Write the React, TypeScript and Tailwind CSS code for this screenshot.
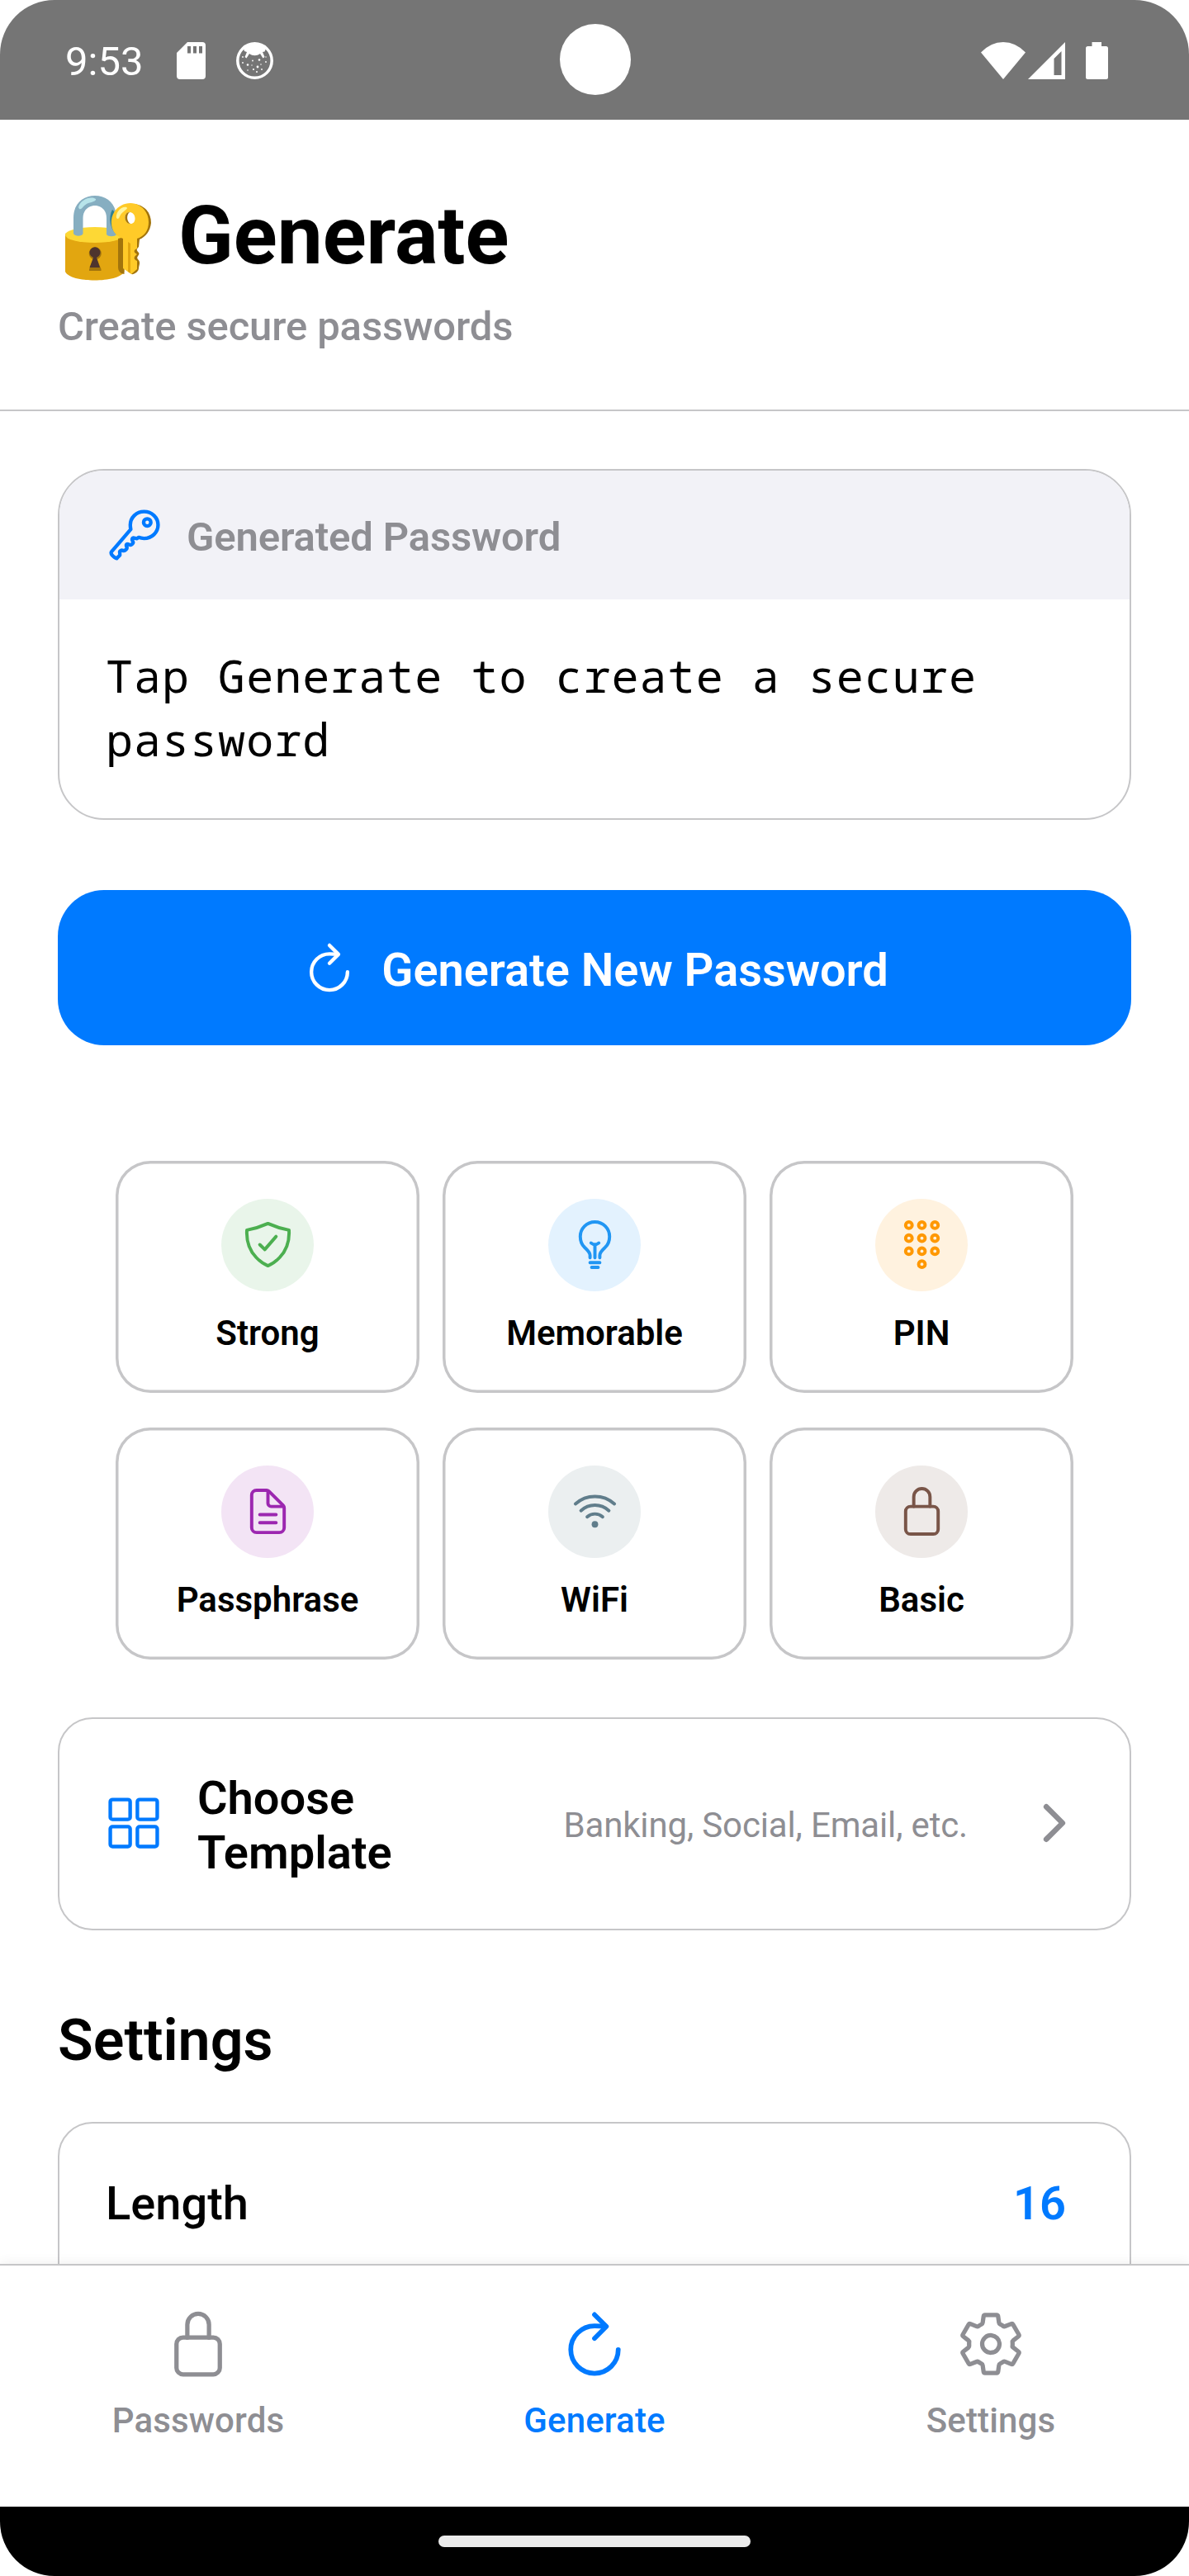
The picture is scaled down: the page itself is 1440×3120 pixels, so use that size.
import type { ComponentType } from "react";
import {
  IoBulbOutline,
  IoChevronForward,
  IoDocumentTextOutline,
  IoGridOutline,
  IoKeyOutline,
  IoKeypadOutline,
  IoLockClosedOutline,
  IoRefreshOutline,
  IoSettingsOutline,
  IoShieldCheckmarkOutline,
  IoWifiOutline,
} from "react-icons/io5";

type IconType = ComponentType<{ className?: string }>;

function SdCardIcon() {
  return (
    <svg className="h-[45px] w-[35px]" viewBox="0 0 35 45" fill="#fff">
      <path
        fillRule="evenodd"
        d="M13 0H31a4 4 0 0 1 4 4V41a4 4 0 0 1-4 4H4a4 4 0 0 1-4-4V13ZM13 5v8.500h4V5ZM20 5v8.500h4V5ZM27 5v8.500h4V5Z"
      />
    </svg>
  );
}

function CatIcon() {
  return (
    <svg className="h-[45px] w-[45px]" viewBox="0 0 45 45">
      <circle cx="22.500" cy="22.500" r="20.700" fill="none" stroke="#fff" strokeWidth="3.500" />
      <path d="M9 8C14 1 31 1 36 8L34.500 11.500 32 12 34.500 18 32.500 19.500 29 14C25 17 20 17 16 14L12.500 19.500 10.500 18 13 12 10 11Z" fill="#fff" />
      <g fill="#fff">
        <circle cx="28" cy="21.500" r="1.300" />
        <circle cx="14" cy="27.500" r="1.300" />
        <circle cx="26" cy="30" r="1.400" />
        <circle cx="20" cy="22.500" r=".9" />
        <circle cx="36" cy="24" r=".9" />
        <circle cx="8" cy="18" r=".9" />
        <circle cx="8" cy="25" r=".9" />
        <circle cx="19" cy="28" r=".7" />
        <circle cx="21" cy="33" r="1.100" />
        <circle cx="25" cy="36" r="1" />
        <circle cx="30" cy="27" r=".8" />
        <circle cx="31" cy="33" r=".9" />
        <circle cx="14" cy="34" r=".8" />
        <circle cx="36" cy="18" r=".7" />
      </g>
    </svg>
  );
}

function LockWithKeyEmoji() {
  return (
    <svg className="h-[104px] w-[106px]" viewBox="0 0 106 104">
      <path d="M0 45C3 59 68 59 71.500 45V92C65 106 6 106 0 92Z" fill="#e2a610" />
      <ellipse cx="35.700" cy="47.500" rx="35.700" ry="9.500" fill="#fdd835" />
      <path d="M10 46V27C10 9 22 0 36 0S62 9 62 27V47C60 50 52 50 50 47V27C50 17 43 12 36 12S21.500 17 21.500 27V46C20 49.500 12 49.500 10 46Z" fill="#86aec1" />
      <path d="M16 14C18 6 28 1 35 3 41 5 33 8 28 9 22 11 20 18 17 16Z" fill="#b8e4ea" />
      <path d="M57 17C52 26 54 40 62 47V27C61 22 60 19 57 17Z" fill="#2f8194" />
      <path d="M64 52L71.500 50V95C66 94 64 91 64 86Z" fill="#a2740c" />
      <path d="M29 89L34 77A7.500 7.500 0 1 1 38.500 77L43.500 89V91H29Z" fill="#a2740c" />
      <path d="M29.500 87L34 75A6.500 6.500 0 1 1 38 75L42 87Z" fill="#4e342e" />
      <path d="M84 10C97 12 104 21 104 33 103 43 97 50 90 53L89 62C86 65 86 66 89 69 91 72 85 74 88 77 92 81 89 84 89 88 89 92 83 96 80 95L76 52 90 20Z" fill="#a2740c" />
      <path
        fillRule="evenodd"
        d="M79 9C91 9 101 19 101 32 101 42 96 49 87 52V64C82 66 83 69 87 71 83 74 82 77 87 79V89L80 95 70 88V52C60 49 55 40 56 30 57 18 67 9 79 9ZM78 20C70 20 71 34 79 34 87 34 86 20 78 20Z"
        fill="#ffca28"
      />
      <path d="M78 20C70 20 71 34 79 34 74 31 74 23 78 20Z" fill="#a2740c" />
      <path d="M76 56L79 58V94L76 92Z" fill="#e2a610" />
      <path d="M62 24C63 17 70 13 74 14 78 16 69 18 66 25 65 29 61 29 62 24Z" fill="#fff59d" />
    </svg>
  );
}

function StatusBar() {
  return (
    <header className="relative flex h-[145px] items-center justify-between bg-[#757575] pt-px pr-[98px] pl-[79px] text-white">
      <div className="flex items-center">
        <span className="w-[135px] pt-[3px] text-[49px] leading-[58px]">9:53</span>
        <SdCardIcon />
        <div className="ml-[37px]">
          <CatIcon />
        </div>
      </div>
      <div className="absolute top-[29px] left-[678px] h-[86px] w-[86px] rounded-full bg-white" />
      <div className="flex items-center">
        <svg className="h-[45px] w-[54px]" viewBox="0 0 54 45" fill="#fff">
          <path d="M0 12.500Q12 0 27 0T54 12.500L27 45Z" />
        </svg>
        <svg className="ml-[3px] h-[45px] w-[45px]" viewBox="0 0 45 45" fill="#fff">
          <path fillRule="evenodd" d="M45 0V45H0ZM40.500 11L31.500 20V40H40.500Z" />
        </svg>
        <svg className="ml-[25px] h-[45px] w-[27px]" viewBox="0 0 27 45" fill="#fff">
          <path d="M7.500 0H19V5H24.500a2.500 2.500 0 0 1 2.500 2.500V42.500a2.500 2.500 0 0 1-2.500 2.500H2.500A2.500 2.500 0 0 1 0 42.500V7.500A2.500 2.500 0 0 1 2.500 5H7.500Z" />
        </svg>
      </div>
    </header>
  );
}

const presets: { label: string; Icon: IconType; disc: string; tint: string }[] = [
  { label: "Strong", Icon: IoShieldCheckmarkOutline, disc: "bg-[#e9f5ea]", tint: "text-[#4caf50]" },
  { label: "Memorable", Icon: IoBulbOutline, disc: "bg-[#e3f2fe]", tint: "text-[#2196f3]" },
  { label: "PIN", Icon: IoKeypadOutline, disc: "bg-[#fff2df]", tint: "text-[#ff9800]" },
  { label: "Passphrase", Icon: IoDocumentTextOutline, disc: "bg-[#f3e4f5]", tint: "text-[#9c27b0]" },
  { label: "WiFi", Icon: IoWifiOutline, disc: "bg-[#ebeff0]", tint: "text-[#607d8b]" },
  { label: "Basic", Icon: IoLockClosedOutline, disc: "bg-[#eeeae8]", tint: "text-[#795548]" },
];

function PresetGrid() {
  return (
    <div className="mt-[140px] grid grid-cols-3 gap-x-7 gap-y-[42px] px-[70px]">
      {presets.map(({ label, Icon, disc, tint }) => (
        <button
          key={label}
          className="flex h-[281px] flex-col items-center rounded-[42px] pt-[46px] shadow-[inset_0_0_0_3.5px_#c6c6c8]"
        >
          <span className={`flex h-28 w-28 items-center justify-center rounded-full pb-[2px] ${disc}`}>
            <Icon className={`size-[63px] ${tint}`} />
          </span>
          <span className="mt-[26px] text-[42px] leading-[50px] font-semibold">{label}</span>
        </button>
      ))}
    </div>
  );
}

const tabs: { label: string; Icon: IconType; active?: boolean }[] = [
  { label: "Passwords", Icon: IoLockClosedOutline },
  { label: "Generate", Icon: IoRefreshOutline, active: true },
  { label: "Settings", Icon: IoSettingsOutline },
];

function TabBar() {
  return (
    <nav className="relative grid h-[294px] grid-cols-3 border-t-2 border-[#c6c6c8] bg-white shadow-[0_0_14px_rgba(0,0,0,0.08)]">
      {tabs.map(({ label, Icon, active }) => (
        <button
          key={label}
          className={`flex flex-col items-center pt-[53px] ${active ? "text-[#007aff]" : "text-[#8e8e93]"}`}
        >
          <span className="flex h-[84px] items-center justify-center">
            <Icon className={active ? "size-[92px] shrink-0" : "size-[84px] shrink-0"} />
          </span>
          <span className="mt-[26px] text-[42px] leading-[50px] font-medium tracking-[0.15px]">{label}</span>
        </button>
      ))}
    </nav>
  );
}

export default function App() {
  return (
    <div className="flex h-[3120px] w-[1440px] flex-col overflow-hidden rounded-[66px] bg-white font-[Roboto,sans-serif] text-black">
      <StatusBar />

      <section className="h-[353px] border-b-2 border-[#c6c6c8] px-[70px] pt-[83px]">
        <h1 className="flex h-[116px] items-center text-[98px] leading-[116px] font-bold">
          <span className="mt-[5px] mr-[31px] ml-[9px]">
            <LockWithKeyEmoji />
          </span>
          Generate
        </h1>
        <p className="mt-[23px] text-[49px] leading-[58px] font-medium tracking-[-0.12px] text-[#8e8e93]">
          Create secure passwords
        </p>
      </section>

      <main className="min-h-0 flex-1 overflow-hidden px-[70px] pt-[70px]">
        <section className="h-[425px] overflow-hidden rounded-[56px] border-2 border-[#c6c6c8]">
          <div className="flex h-[156px] items-center bg-[#f2f2f7] pl-14">
            <IoKeyOutline className="size-[70px] text-[#007aff]" />
            <h2 className="mt-[5px] ml-7 text-[49px] leading-[58px] font-semibold tracking-[-0.15px] text-[#8e8e93]">
              Generated Password
            </h2>
          </div>
          <p className="px-14 pt-[53px] font-['Droid_Sans_Mono','Noto_Sans_Mono','DejaVu_Sans_Mono',monospace] text-[55px] leading-[77px] tracking-[1.03px]">
            Tap Generate to create a secure password
          </p>
        </section>

        <button className="mt-[85px] flex h-[188px] w-full items-center justify-center rounded-[56px] bg-[#007aff] text-white">
          <IoRefreshOutline className="size-[70px]" />
          <span className="mt-[5px] ml-7 text-[56px] leading-[66px] font-semibold tracking-[-0.05px]">
            Generate New Password
          </span>
        </button>

        <PresetGrid />

        <section className="mt-[70px] flex h-[258px] items-center rounded-[42px] border-2 border-[#c6c6c8] px-14">
          <IoGridOutline className="-mt-[2px] -ml-px size-[70px] text-[#007aff]" />
          <h2 className="mt-[3px] ml-[42px] w-[400px] text-[56px] leading-[66px] font-semibold">
            Choose
            <br />
            Template
          </h2>
          <span className="mt-[3px] ml-auto text-[42px] leading-[50px] tracking-[-0.15px] text-[#8e8e93]">
            Banking, Social, Email, etc.
          </span>
          <IoChevronForward className="-mt-[2px] ml-[70px] size-[70px] text-[#8e8e93]" />
        </section>

        <h2 className="mt-[91px] text-[70px] leading-[84px] font-semibold">Settings</h2>

        <section className="mt-[57px] h-[300px] rounded-[42px] border-2 border-[#c6c6c8] pt-[64px] pr-[77px] pl-14">
          <div className="flex justify-between text-[56px] leading-[66px]">
            <span className="font-medium">Length</span>
            <span className="font-semibold text-[#007aff]">16</span>
          </div>
        </section>
      </main>

      <TabBar />

      <footer className="flex h-[84px] justify-center bg-black pt-[35px]">
        <div className="h-[14px] w-[378px] rounded-full bg-[#ebebeb]" />
      </footer>
    </div>
  );
}
